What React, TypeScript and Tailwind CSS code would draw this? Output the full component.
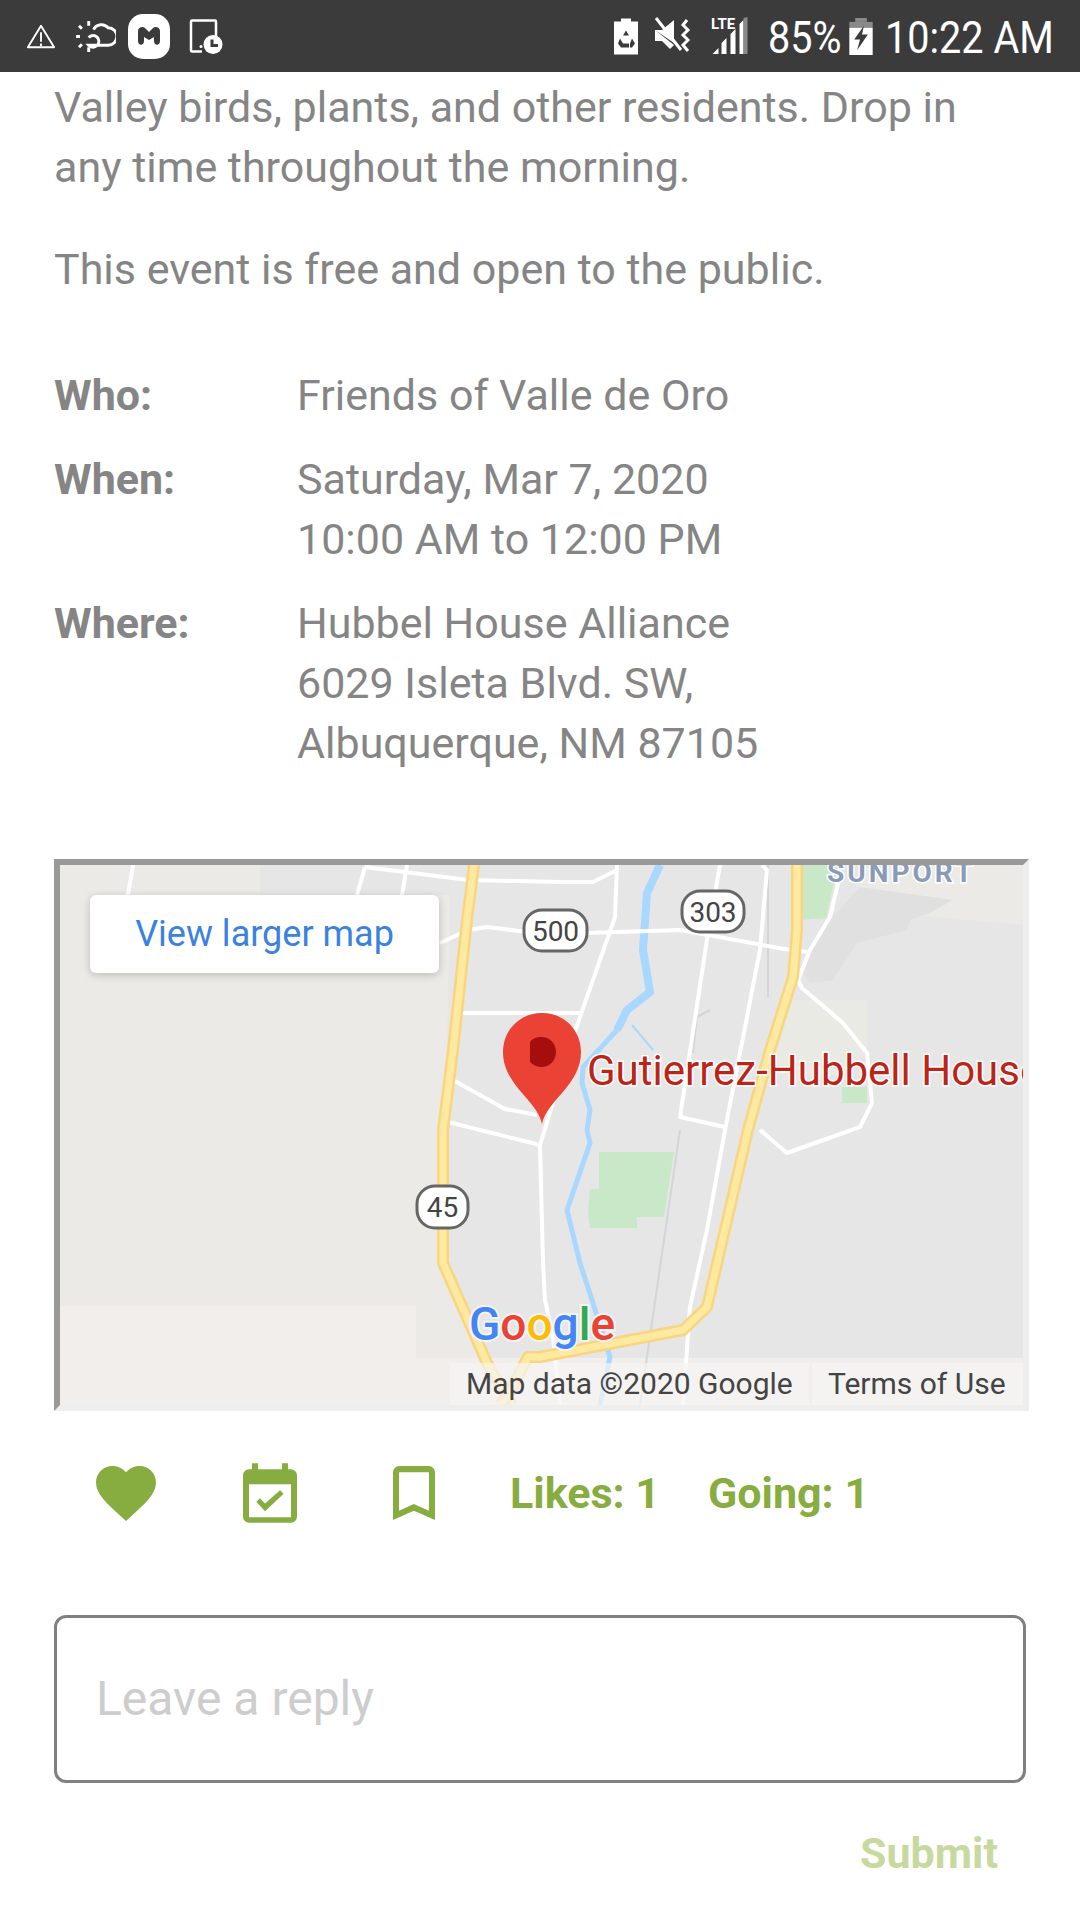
const roads = [
  'M133 865L128 895',
  'M365 867L357 895',
  'M407 865L402 895',
  'M365 867L468 880L560 882L593 882L617 870',
  'M617 865L615 917L573 1037L540 1145',
  'M440 943L468 930L487 927L527 932L587 933L680 930L790 950L807 952',
  'M462 1013L582 1013',
  'M453 1080L505 1109L537 1115',
  'M448 1122L540 1145L543 1263L545 1300L553 1337L560 1405',
  'M720 865L708 933L680 1117L725 1127',
  'M762 865L767 870L760 950L725 1130L707 1230L690 1307L683 1405',
  'M838 883L830 917L810 950L798 980L802 988L843 1023L867 1053L872 1103L860 1127L787 1153L760 1130',
];

function Shield({ x, y, w, h, label }: { x: number; y: number; w: number; h: number; label: string }) {
  return (
    <g>
      <rect x={x} y={y} width={w} height={h} rx={18} fill="#fff" stroke="#666" strokeWidth={3} />
      <text x={x + w / 2} y={y + h / 2 + 10} textAnchor="middle" fontSize={28} fill="#444" fontFamily="Roboto, sans-serif">
        {label}
      </text>
    </g>
  );
}

function MapDrawing() {
  return (
    <svg viewBox="60 865 963 540" className="block h-full w-full">
      <rect x="60" y="865" width="963" height="540" fill="#e6e6e6" />
      <path d="M60 865H260V895H450L443 1263L487 1358H60Z" fill="#ebeae6" />
      <path d="M60 1306H416V1358H1023V1405H60Z" fill="#f1eeeb" />
      <path d="M860 865H1023V925L913 915L860 887Z" fill="#ebeae6" />
      <path d="M860 887L953 900L930 913L910 920L907 930L857 943L833 980L810 983L800 970L830 920Z" fill="#e0e0e0" />
      <path d="M793 1000L867 1000V1050L850 1075H770Z" fill="#eaeae4" />

      {/* parks */}
      <path d="M802 865H838L826 918L800 920Z" fill="#c8e8c8" />
      <path d="M842 1087H867V1103H842Z" fill="#c8e8c8" />
      <path d="M599 1152H674L664 1217H637V1228H590L588 1212L590 1189H599Z" fill="#c8e8c8" />

      {/* river */}
      <path d="M660 865L647 893L643 950L650 992L627 1010L617 1030" fill="none" stroke="#a8d8ff" strokeWidth={8} />
      <path d="M617 1030L583 1067L582 1083L590 1110L587 1130L590 1143L567 1210L580 1263L593 1303L610 1357L600 1405" fill="none" stroke="#a8d8ff" strokeWidth={5} />
      <path d="M632 1025L653 1050" fill="none" stroke="#a8d8ff" strokeWidth={2} />

      {/* rail lines */}
      <path d="M768 865V997M680 1130L640 1405M710 1010L697 1017L693 1053" fill="none" stroke="#d3d5d9" strokeWidth={2} />

      {roads.map((d) => (
        <path key={d} d={d} fill="none" stroke="#fff" strokeWidth={4} strokeLinejoin="round" />
      ))}

      {/* highways */}
      {[
        'M474 865L467 920L453 1050L443 1130L443 1263L487 1363L512 1405',
        'M797 865L797 930L793 977L770 1050L748 1130L707 1307L683 1330L540 1357L528 1357L507 1397L500 1405',
      ].map((d) => (
        <g key={d}>
          <path d={d} fill="none" stroke="#f8d57e" strokeWidth={12} strokeLinejoin="round" />
          <path d={d} fill="none" stroke="#fde9a0" strokeWidth={7} strokeLinejoin="round" />
        </g>
      ))}

      <Shield x={524} y={910} w={63} h={41} label="500" />
      <Shield x={682} y={891} w={62} h={41} label="303" />
      <Shield x={417} y={1186} w={51} h={42} label="45" />

      <text x="827" y="882" fontSize={28} fontWeight={700} letterSpacing={3} fill="#8a9bb8" stroke="#fff" strokeWidth={3} paintOrder="stroke" fontFamily="Roboto, sans-serif">
        SUNPORT
      </text>

      {/* pin */}
      <path d="M542 1124C537 1100 503 1085 503 1052C503 1030 520 1013 542 1013C564 1013 581 1030 581 1052C581 1085 547 1100 542 1124Z" fill="#ea4335" />
      <path d="M530 1042C534 1037 538 1037 542 1037C550 1037 556 1044 556 1052C556 1060 550 1067 542 1067C538 1067 534 1066 530 1062Z" fill="#a60d0d" />
      <text x="587" y="1085" fontSize={42} fill="#bd2418" stroke="#fff" strokeWidth={3} paintOrder="stroke" fontFamily="Roboto, sans-serif">
        Gutierrez-Hubbell House
      </text>

      {/* google wordmark */}
      <text x="469" y="1340" fontSize={46} fontWeight={500} stroke="#f4f4f4" strokeWidth={4} paintOrder="stroke" fontFamily="Roboto, sans-serif">
        <tspan fill="#4285f4">G</tspan>
        <tspan fill="#ea4335">o</tspan>
        <tspan fill="#fbbc05">o</tspan>
        <tspan fill="#4285f4">g</tspan>
        <tspan fill="#34a853">l</tspan>
        <tspan fill="#ea4335">e</tspan>
      </text>
    </svg>
  );
}

export default function App() {
  return (
    <div className="h-[1920px] w-[1080px] overflow-hidden bg-white font-['Roboto',sans-serif] text-[43px] leading-[60px] text-[#858585]">
      {/* status bar */}
      <div className="flex h-[72px] items-center justify-between bg-[#3b3b3b] pl-[26px] pr-[27px] text-white">
        <div className="flex items-center">
          <svg width="30" height="28" viewBox="0 0 32 28" fill="none" stroke="#fff" strokeWidth="2">
            <path d="M16 3L30 26H2Z" strokeLinejoin="round" />
            <path d="M16 10V20M16 22V25" />
          </svg>
          <svg className="ml-[19px]" width="41" height="33" viewBox="0 0 42 34" fill="none" stroke="#fff" strokeWidth="3">
            <path d="M14 18A6 6 0 1 1 14 26H34A8 8 0 0 0 34 8A9 9 0 0 0 19 10" />
            <path d="M14 1V6M14 28V33M1 17H5M4 6L7 9M4 28L7 25" />
          </svg>
          <div className="ml-[12px] flex h-[45px] w-[42px] items-center justify-center rounded-[15px] bg-white">
            <svg width="26" height="24" viewBox="0 0 26 22" fill="#3b3b3b">
              <path d="M2 6C2 2 7 1 9 3L13 7L17 3C19 1 24 2 24 6V16C24 21 18 21 18 16V12L13 15L8 12V16C8 21 2 21 2 16Z" />
            </svg>
          </div>
          <svg className="ml-[19px]" width="34" height="37" viewBox="0 0 34 36" fill="none">
            <path d="M13 33H3A1 1 0 0 1 2 32V3A1 1 0 0 1 3 2H26A1 1 0 0 1 27 3V18" stroke="#fff" strokeWidth="2.5" />
            <circle cx="24" cy="26" r="9.5" fill="#fff" />
            <path d="M23 21V27H29" stroke="#3b3b3b" strokeWidth="3" fill="none" />
            <circle cx="12" cy="28" r="1.5" fill="#fff" />
          </svg>
        </div>
        <div className="flex items-center">
          <svg width="24" height="37" viewBox="0 0 24 36" fill="#fff">
            <path d="M7 0H17V3H24V36H0V3H7Z" />
            <path d="M12 12L15 17H9ZM6 20L9 25H15V29H7L4 25ZM18 20L21 25L18 29H16V25Z" fill="#3b3b3b" />
          </svg>
          <svg className="ml-[16px]" width="38" height="38" viewBox="0 0 38 38" fill="#fff">
            <path d="M1 13H8L20 3V26ZM1 13V24H8L16 32L20 28Z" />
            <path d="M2 1L27 33" stroke="#fff" strokeWidth="3" />
            <path d="M33 3L29 8L34 13L29 18L34 23L29 28L34 34" stroke="#fff" strokeWidth="3" fill="none" />
          </svg>
          <div className="relative ml-[19px] h-[38px] w-[37px]">
            <span className="absolute left-0 top-0 text-[15px] font-bold leading-[15px]">LTE</span>
            <svg className="absolute left-0 top-0" width="37" height="38" viewBox="0 0 36 38">
              <path d="M1 37L7 31V37ZM10 37V26L15 21V37ZM19 37V17L24 12V37Z" fill="#fff" />
              <path d="M28 37V7L32 3V37Z" fill="#fff" />
              <path d="M32 37V1L36 0V37Z" fill="#8a8a8a" />
            </svg>
          </div>
          <span className="ml-[20px] mt-[4px] inline-block w-[72px] origin-left scale-x-[0.88] whitespace-nowrap text-[45px] leading-[48px]">85%</span>
          <svg className="ml-[9px]" width="24" height="37" viewBox="0 0 24 38">
            <path d="M6 0H18V4H6Z" fill="#8a8a8a" />
            <path d="M0 4H24V10H0Z" fill="#8a8a8a" />
            <path d="M0 10H24V38H0Z" fill="#fff" />
            <path d="M15 8L5 22H11L8 33L19 17H13Z" fill="#3b3b3b" />
          </svg>
          <span className="ml-[12px] mt-[4px] inline-block w-[168px] origin-left scale-x-[0.88] whitespace-nowrap text-[45px] leading-[48px]">10:22 AM</span>
        </div>
      </div>

      <div className="px-[54px]">
        <p className="mt-[5px]">Valley birds, plants, and other residents. Drop in<br />any time throughout the morning.</p>
        <p className="mt-[42px]">This event is free and open to the public.</p>

        <dl className="mt-[66px]">
          <div className="flex">
            <dt className="w-[243px] font-bold">Who:</dt>
            <dd>Friends of Valle de Oro</dd>
          </div>
          <div className="mt-[24px] flex">
            <dt className="w-[243px] font-bold">When:</dt>
            <dd>Saturday, Mar 7, 2020<br />10:00 AM to 12:00 PM</dd>
          </div>
          <div className="mt-[24px] flex">
            <dt className="w-[243px] font-bold">Where:</dt>
            <dd>Hubbel House Alliance<br />6029 Isleta Blvd. SW,<br />Albuquerque, NM 87105</dd>
          </div>
        </dl>
      </div>

      {/* map */}
      <div className="relative ml-[54px] mt-[86px] h-[552px] w-[975px] border-[6px] border-b-[#eeeeee] border-l-[#999999] border-r-[#eeeeee] border-t-[#999999]">
        <MapDrawing />
        <a className="absolute left-[30px] top-[30px] flex h-[78px] w-[349px] items-center justify-center rounded-[6px] bg-white text-[36px] text-[#3b82e0] shadow-[0_2px_8px_rgba(0,0,0,0.2)]">
          View larger map
        </a>
        <div className="absolute bottom-0 right-0 flex h-[42px] text-[30px] leading-[42px] text-[#444444]">
          <span className="w-[359px] bg-[#f5f5f5]/70 pl-[16px]">Map data ©2020 Google</span>
          <span className="ml-[3px] w-[211px] bg-[#f5f5f5]/70 pl-[16px]">Terms of Use</span>
        </div>
      </div>

      {/* actions */}
      <div className="mt-[52px] flex h-[60px] items-center pl-[96px] text-[#87ad41]">
        <svg width="60" height="55" viewBox="2 3 20 18.35" fill="currentColor">
          <path d="M12 21.35l-1.45-1.32C5.4 15.36 2 12.28 2 8.5 2 5.42 4.42 3 7.5 3c1.74 0 3.41.81 4.5 2.09C13.09 3.81 14.76 3 16.5 3 19.58 3 22 5.42 22 8.5c0 3.78-3.4 6.86-8.55 11.54L12 21.35z" />
        </svg>
        <svg className="ml-[87px]" width="54" height="60" viewBox="489 66 162 179" fill="currentColor">
          <path
            fillRule="evenodd"
            d="M516 66H534V84H606V66H624V84H633A18 18 0 0 1 651 102V227A18 18 0 0 1 633 245H507A18 18 0 0 1 489 227V102A18 18 0 0 1 507 84H516ZM507 129V228H633V129Z"
          />
          <path d="M529 182L540 171L555 187L600 147L611 158L555 210Z" />
        </svg>
        <svg className="ml-[96px]" width="42" height="54" viewBox="940 85 125 160" fill="currentColor">
          <path
            fillRule="evenodd"
            d="M958 85H1047A18 18 0 0 1 1065 103V245L1002 218L940 245V103A18 18 0 0 1 958 85ZM958 103V218L1002 198L1047 218V103Z"
          />
        </svg>
        <span className="ml-[75px] font-bold">Likes: 1</span>
        <span className="ml-[48px] font-bold">Going: 1</span>
      </div>

      {/* reply form */}
      <div className="ml-[54px] mt-[92px] flex h-[168px] w-[972px] items-center rounded-[12px] border-[3px] border-[#808080] pl-[39px] text-[48px] text-[#cdcdcd]">
        Leave a reply
      </div>
      <div className="mr-[82px] mt-[40px] text-right font-bold text-[#c8d9a0]">Submit</div>
    </div>
  );
}
